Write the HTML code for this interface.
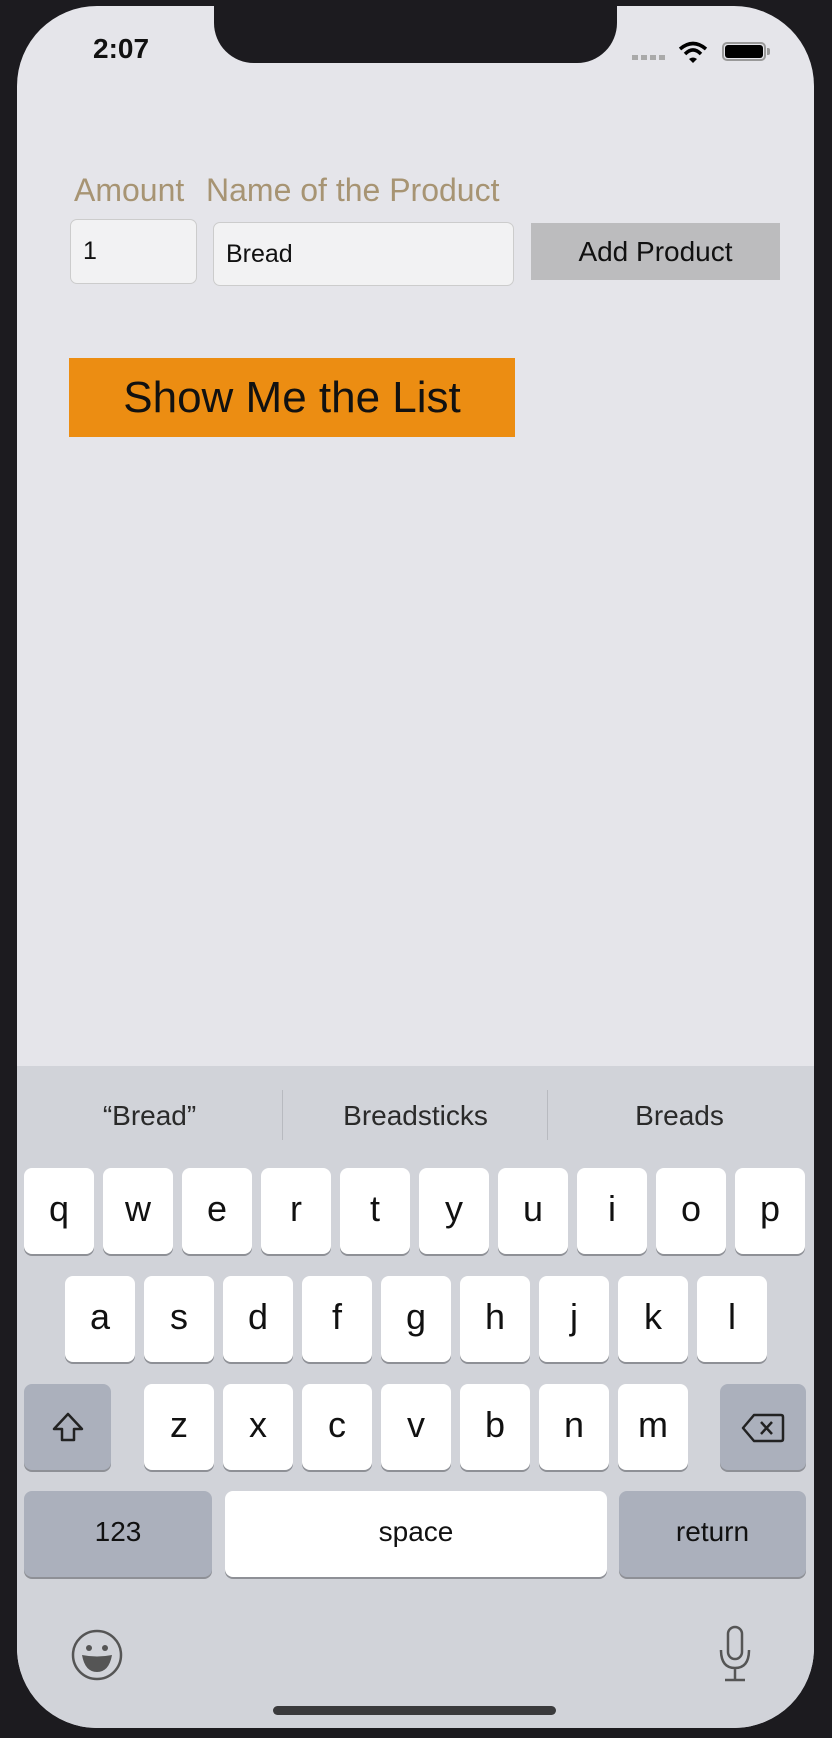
<!DOCTYPE html>
<html><head><meta charset="utf-8"><style>
*{margin:0;padding:0;box-sizing:border-box}
body{width:832px;height:1738px;background:#1c1b1f;position:relative;overflow:hidden;font-family:"Liberation Sans",sans-serif}
.screen{position:absolute;left:17px;top:6px;width:797px;height:1722px;background:#e5e5ea;border-radius:80px;overflow:hidden}
.abs{position:absolute}
.notch{position:absolute;left:197px;top:-10px;width:403px;height:67px;background:#1c1b1f;border-radius:0 0 40px 40px}
.kb{position:absolute;left:0;top:1060px;width:797px;height:670px;background:#d1d3d9}
.key{position:absolute;width:70px;height:86px;background:#fff;border-radius:8px;box-shadow:0 2px 0 #8e9096;text-align:center;line-height:82px;font-size:36px;color:#111}
.dk{background:#abb0bc}
.sug{position:absolute;top:1094px;font-size:28px;color:#2a2a2a;text-align:center;width:265px}
</style></head><body>
<div class="screen">
<div class="notch"></div>
<div class="abs" style="left:76px;top:27px;font-size:28px;font-weight:bold;color:#111">2:07</div>
<div class="abs" style="left:615px;top:49px;width:35px;height:5px;background:repeating-linear-gradient(90deg,#aaa 0 6px,transparent 6px 9px)"></div>
<svg class="abs" style="left:661px;top:35px" width="30" height="22" viewBox="0 0 30 22"><path d="M2 8 Q15 -3 28 8" stroke="#000" stroke-width="3.5" fill="none"/><path d="M7 13 Q15 5 23 13" stroke="#000" stroke-width="3.5" fill="none"/><path d="M11 18 L15 22 L19 18 Q15 15 11 18Z" fill="#000"/></svg>
<div class="abs" style="left:705px;top:36px;width:44px;height:19px;border:2px solid #999;border-radius:5px;padding:1px"><div style="width:100%;height:100%;background:#000;border-radius:3px"></div></div>
<div class="abs" style="left:750px;top:42px;width:3px;height:7px;background:#999;border-radius:0 2px 2px 0"></div>

<div class="abs" style="left:57px;top:166px;font-size:32px;color:#a79473">Amount</div>
<div class="abs" style="left:189px;top:166px;font-size:32px;color:#a79473">Name of the Product</div>
<div class="abs" style="left:53px;top:213px;width:127px;height:65px;background:#f2f2f3;border:1.5px solid #ccc;border-radius:7px;font-size:25px;line-height:62px;padding-left:12px;color:#111">1</div>
<div class="abs" style="left:196px;top:216px;width:301px;height:64px;background:#f2f2f3;border:1.5px solid #ccc;border-radius:7px;font-size:25px;line-height:62px;padding-left:12px;color:#111">Bread</div>
<div class="abs" style="left:514px;top:217px;width:249px;height:57px;background:#bcbcbe;font-size:28px;line-height:57px;text-align:center;color:#111">Add Product</div>
<div class="abs" style="left:52px;top:352px;width:446px;height:79px;background:#ec8d12;font-size:44px;line-height:79px;text-align:center;color:#111">Show Me the List</div>

<div class="kb"></div>
<div class="sug" style="left:0px">“Bread”</div>
<div class="sug" style="left:266px">Breadsticks</div>
<div class="sug" style="left:530px">Breads</div>
<div class="abs" style="left:265px;top:1084px;width:1px;height:50px;background:#b8bac0"></div>
<div class="abs" style="left:530px;top:1084px;width:1px;height:50px;background:#b8bac0"></div>

<div class="key" style="left:7px;top:1162px">q</div>
<div class="key" style="left:86px;top:1162px">w</div>
<div class="key" style="left:165px;top:1162px">e</div>
<div class="key" style="left:244px;top:1162px">r</div>
<div class="key" style="left:323px;top:1162px">t</div>
<div class="key" style="left:402px;top:1162px">y</div>
<div class="key" style="left:481px;top:1162px">u</div>
<div class="key" style="left:560px;top:1162px">i</div>
<div class="key" style="left:639px;top:1162px">o</div>
<div class="key" style="left:718px;top:1162px">p</div>

<div class="key" style="left:48px;top:1270px">a</div>
<div class="key" style="left:127px;top:1270px">s</div>
<div class="key" style="left:206px;top:1270px">d</div>
<div class="key" style="left:285px;top:1270px">f</div>
<div class="key" style="left:364px;top:1270px">g</div>
<div class="key" style="left:443px;top:1270px">h</div>
<div class="key" style="left:522px;top:1270px">j</div>
<div class="key" style="left:601px;top:1270px">k</div>
<div class="key" style="left:680px;top:1270px">l</div>

<div class="key dk" style="left:7px;top:1378px;width:87px"><svg width="40" height="40" viewBox="0 0 40 40" style="margin-top:24px"><path d="M20 6 L34 21 H26 V32 H14 V21 H6 Z" fill="none" stroke="#222" stroke-width="2.5" stroke-linejoin="round"/></svg></div>
<div class="key" style="left:127px;top:1378px">z</div>
<div class="key" style="left:206px;top:1378px">x</div>
<div class="key" style="left:285px;top:1378px">c</div>
<div class="key" style="left:364px;top:1378px">v</div>
<div class="key" style="left:443px;top:1378px">b</div>
<div class="key" style="left:522px;top:1378px">n</div>
<div class="key" style="left:601px;top:1378px">m</div>
<div class="key dk" style="left:703px;top:1378px;width:86px"><svg width="46" height="34" viewBox="0 0 46 34" style="margin-top:27px"><path d="M14 4 H41 Q43 4 43 6 V28 Q43 30 41 30 H14 L3 17 Z" fill="none" stroke="#222" stroke-width="2.5" stroke-linejoin="round"/><path d="M21 11 L32 23 M32 11 L21 23" stroke="#222" stroke-width="2.5"/></svg></div>

<div class="key dk" style="left:7px;top:1485px;width:188px;font-size:28px">123</div>
<div class="key" style="left:208px;top:1485px;width:382px;font-size:28px">space</div>
<div class="key dk" style="left:602px;top:1485px;width:187px;font-size:28px">return</div>

<svg class="abs" style="left:53px;top:1622px" width="54" height="54" viewBox="0 0 54 54"><circle cx="27" cy="27" r="24" fill="none" stroke="#555" stroke-width="2.5"/><circle cx="19" cy="20" r="3" fill="#555"/><circle cx="35" cy="20" r="3" fill="#555"/><path d="M12 27 Q27 30 42 27 Q39 44 27 44 Q15 44 12 27Z" fill="#555"/></svg>
<svg class="abs" style="left:698px;top:1618px" width="40" height="60" viewBox="0 0 40 60"><rect x="13" y="3" width="14" height="32" rx="7" fill="none" stroke="#555" stroke-width="2.5"/><path d="M6 26 Q6 44 20 44 Q34 44 34 26 M20 44 V55 M10 56 H30" fill="none" stroke="#555" stroke-width="2.5"/></svg>
<div class="abs" style="left:256px;top:1700px;width:283px;height:9px;background:#3a3a3c;border-radius:5px"></div>
</div>
</body></html>
